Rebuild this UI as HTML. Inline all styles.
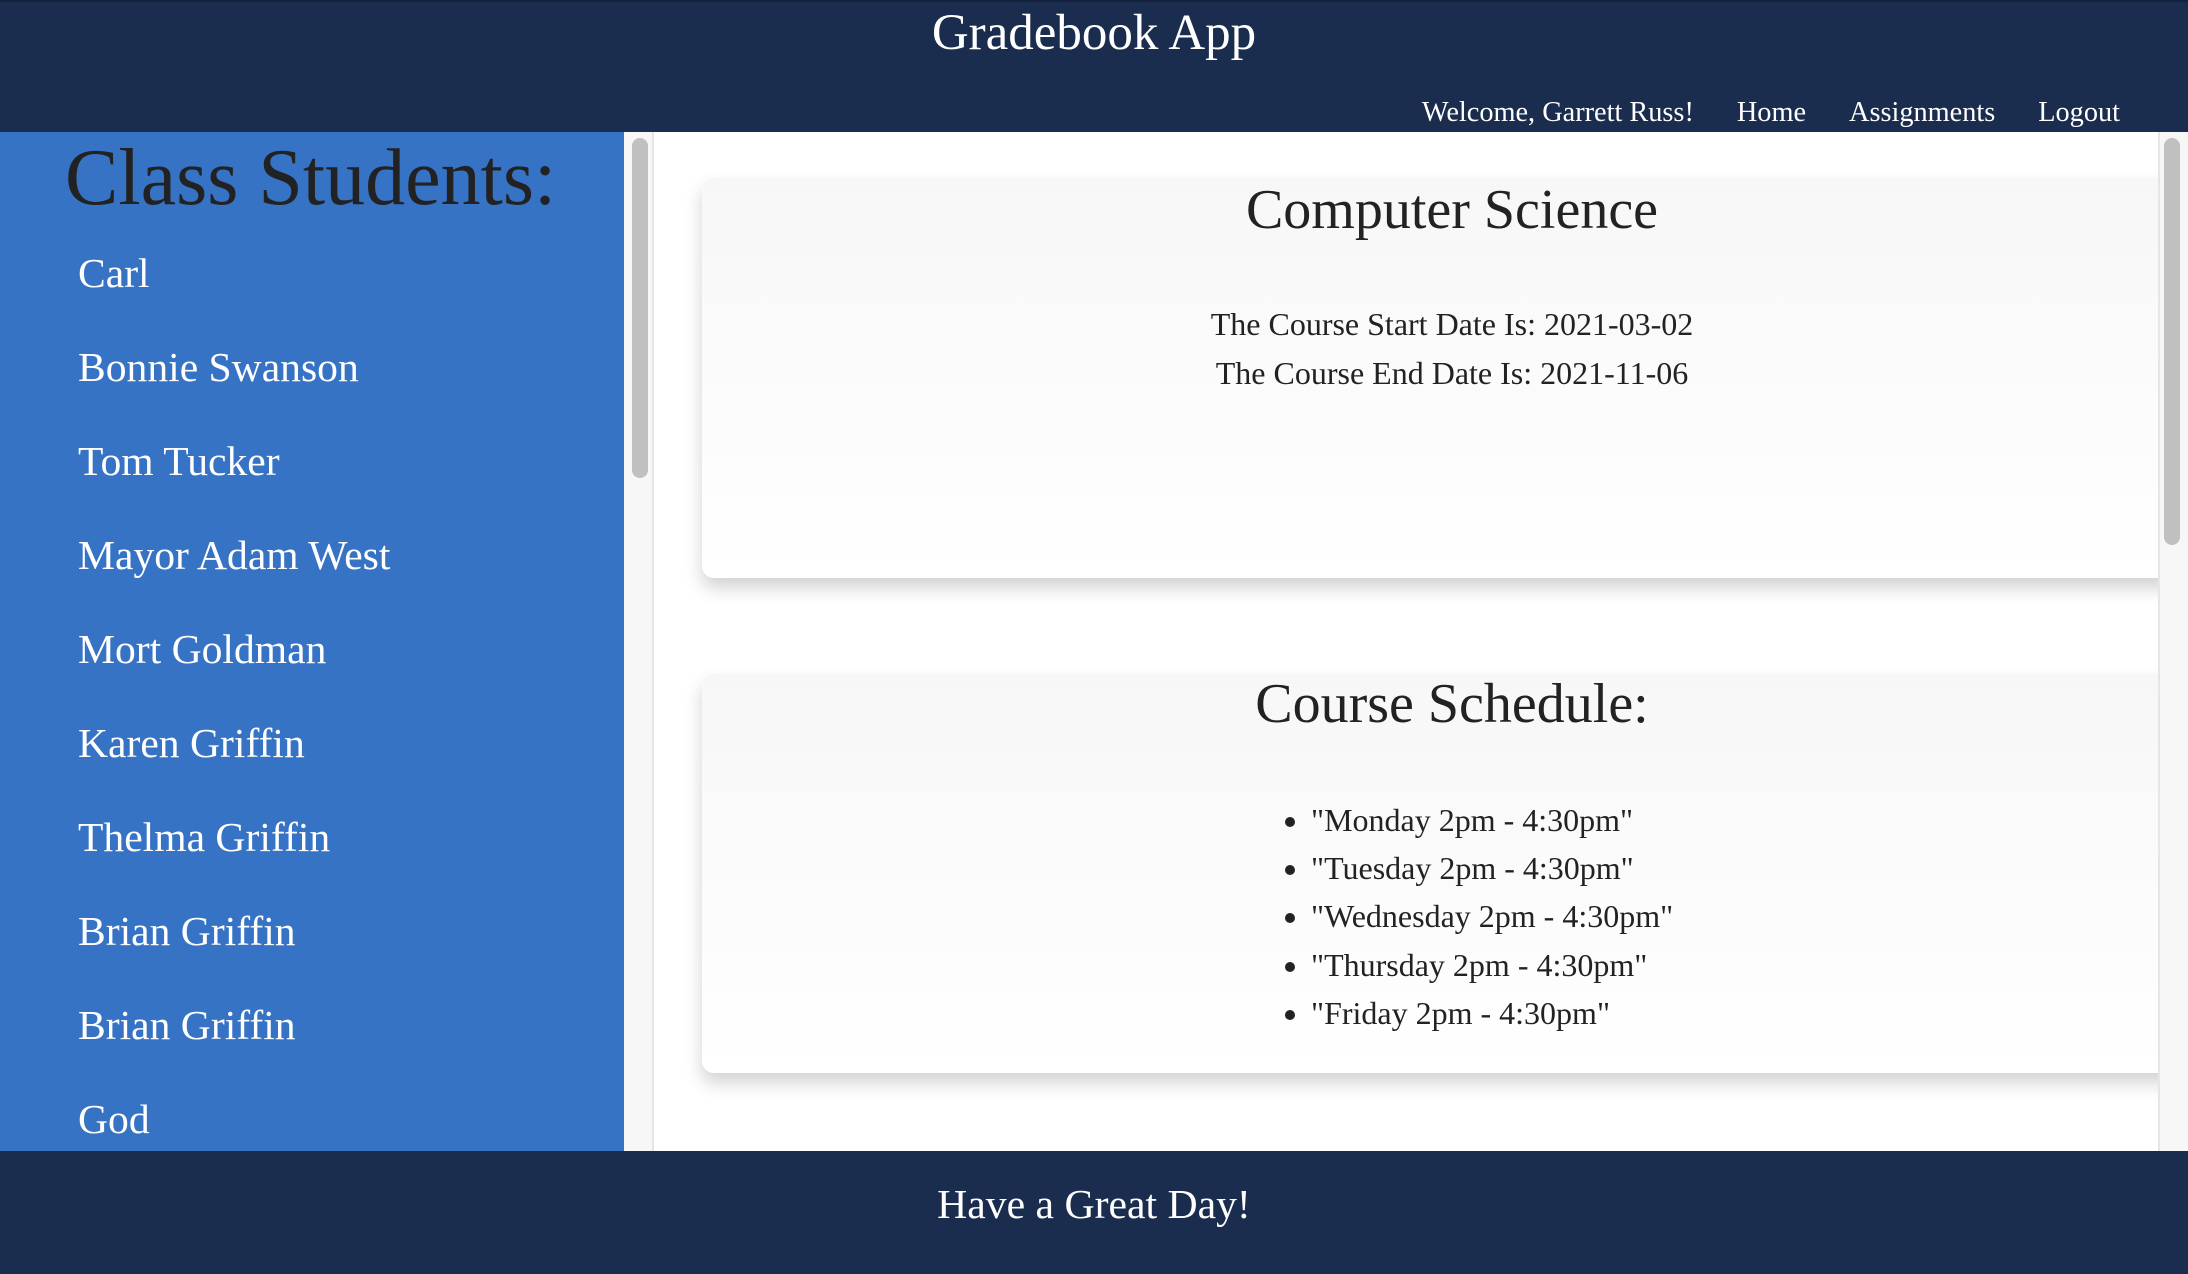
<!DOCTYPE html>
<html><head><style>
*{margin:0;padding:0;box-sizing:border-box}
body{width:2188px;height:1274px;overflow:hidden;font-family:"Liberation Serif",serif;background:#fff;position:relative}
.hdr{position:absolute;left:0;top:0;width:2188px;height:132px;background:#1b2d4e;border-top:2px solid #13213a}
.title{position:absolute;left:0;width:2188px;top:-1px;text-align:center;color:#fff;font-size:51px;line-height:64px}
.nav{position:absolute;right:68px;top:94px;color:#fff;font-size:28.3px;line-height:34px;white-space:nowrap}
.nav span{margin-left:43px}
.side{position:absolute;left:0;top:132px;width:624px;height:1019px;background:#3673c5;overflow:hidden}
.side h1{position:absolute;left:65px;top:-2px;font-weight:normal;font-size:80px;color:#222;white-space:nowrap;line-height:96px}
.side .s{position:absolute;left:78px;color:#fff;font-size:41.6px;line-height:50px;white-space:nowrap}
.track{position:absolute;left:624px;top:132px;width:30px;height:1019px;background:#f7f7f7;border-right:2px solid #e6e6e6}
.thumb{position:absolute;border-radius:9px;background:#c0c0c0}
.main{position:absolute;left:654px;top:132px;width:1504px;height:1019px;overflow:hidden;background:#fff}
.card{position:absolute;left:48px;width:1550px;border-radius:12px;background:linear-gradient(#f7f7f7,#fff);box-shadow:0 10px 18px rgba(0,0,0,.18)}
.card h2{font-weight:normal;text-align:center;font-size:56px;color:#222;position:absolute;left:0;width:1500px}
.card p{position:absolute;left:0;width:1500px;text-align:center;font-size:32px;color:#222}
.rtrack{position:absolute;left:2158px;top:132px;width:30px;height:1019px;background:#f7f7f7;border-left:2px solid #e6e6e6}
.ftr{position:absolute;left:0;top:1151px;width:2188px;height:123px;background:#1b2d4e;color:#fff;text-align:center;font-size:41.7px;line-height:50px;padding-top:29px}
ul{position:absolute;left:581px;top:122px;font-size:32px;color:#222;line-height:48.2px;list-style:disc;padding-left:28px;white-space:nowrap}
</style></head><body>
<div class="hdr"><div class="title">Gradebook App</div>
<div class="nav">Welcome, Garrett Russ!<span>Home</span><span>Assignments</span><span>Logout</span></div></div>
<div class="side">
<h1>Class Students:</h1>
<div class="s" style="top:116px">Carl</div>
<div class="s" style="top:210px">Bonnie Swanson</div>
<div class="s" style="top:304px">Tom Tucker</div>
<div class="s" style="top:398px">Mayor Adam West</div>
<div class="s" style="top:492px">Mort Goldman</div>
<div class="s" style="top:586px">Karen Griffin</div>
<div class="s" style="top:680px">Thelma Griffin</div>
<div class="s" style="top:774px">Brian Griffin</div>
<div class="s" style="top:868px">Brian Griffin</div>
<div class="s" style="top:962px">God</div>
</div>
<div class="track"><div class="thumb" style="left:8px;top:6px;width:16px;height:340px"></div></div>
<div class="main">
<div class="card" style="top:46px;height:400px">
<h2 style="top:0px;line-height:64px">Computer Science</h2>
<p style="top:122px;line-height:48.8px">The Course Start Date Is: 2021-03-02<br>The Course End Date Is: 2021-11-06</p>
</div>
<div class="card" style="top:542px;height:399px">
<h2 style="top:-2px;line-height:64px">Course Schedule:</h2>
<ul><li>"Monday 2pm - 4:30pm"</li><li>"Tuesday 2pm - 4:30pm"</li><li>"Wednesday 2pm - 4:30pm"</li><li>"Thursday 2pm - 4:30pm"</li><li>"Friday 2pm - 4:30pm"</li></ul>
</div>
</div>
<div class="rtrack"><div class="thumb" style="left:4px;top:6px;width:16px;height:407px"></div></div>
<div class="ftr">Have a Great Day!</div>
</body></html>
